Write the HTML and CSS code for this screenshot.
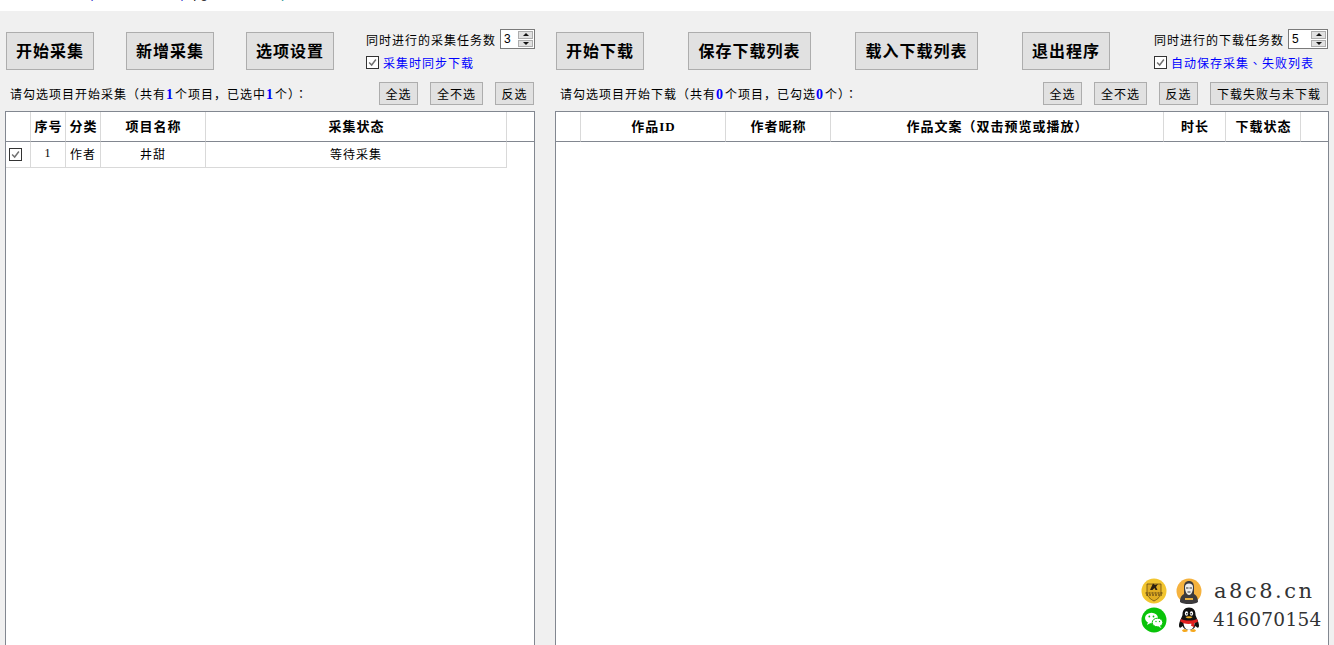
FILE: index.html
```html
<!DOCTYPE html>
<html lang="en">

<head>
  <meta charset="UTF-8">
  <meta name="viewport" content="width=device-width, initial-scale=1.0">
  <title>采集下载工具</title>
  <link rel="stylesheet" href="styles.css">
</head>

<body>
  <div class="titlebar">
    <div class="title-text"><span class="title-mark">3</span> 作品批量采集<span class="title-link">(</span>a8c8.cn/a8c8 <span class="title-sep">|</span> <span class="title-page">pg a8c8</span><span class="title-end">)</span></div>
  </div>

  <div class="main">
    <section class="panel panel-left">
      <div class="toolbar">
        <button class="big-btn">开始采集</button>
        <button class="big-btn">新增采集</button>
        <button class="big-btn">选项设置</button>
        <div class="options">
          <div class="task-row">
            <span>同时进行的采集任务数</span>
            <div class="spin spin-left"><span class="spin-value">3</span><span class="spin-arrows"><i class="up"></i><i class="down"></i></span></div>
          </div>
          <div class="check-row">
            <span class="check"><svg viewBox="0 0 13 13"><path d="M2.500 6.500l3 3 5-6.500" /></svg></span>
            <span class="blue-label">采集时同步下载</span>
          </div>
        </div>
      </div>

      <div class="selectbar">
        <p class="hint">请勾选项目开始采集（共有<b>1</b>个项目，已选中<b>1</b>个）<span class="mid-punct">：</span></p>
        <button class="small-btn btn-2">全选</button>
        <button class="small-btn btn-3">全不选</button>
        <button class="small-btn btn-2">反选</button>
      </div>

      <div class="list">
        <table>
          <colgroup>
            <col class="w-25">
            <col class="w-35">
            <col class="w-35">
            <col class="w-105">
            <col class="w-301">
            <col>
          </colgroup>
          <thead>
            <tr>
              <th></th>
              <th>序号</th>
              <th>分类</th>
              <th>项目名称</th>
              <th>采集状态</th>
              <th class="filler"></th>
            </tr>
          </thead>
          <tbody>
            <tr>
              <td class="check-cell"><span class="check"><svg viewBox="0 0 13 13"><path d="M2.500 6.500l3 3 5-6.500" /></svg></span></td>
              <td class="num">1</td>
              <td>作者</td>
              <td>井甜</td>
              <td>等待采集</td>
              <td class="filler"></td>
            </tr>
          </tbody>
        </table>
      </div>
    </section>

    <section class="panel panel-right">
      <div class="toolbar toolbar-right">
        <button class="big-btn">开始下载</button>
        <button class="big-btn big-wide">保存下载列表</button>
        <button class="big-btn big-wide">载入下载列表</button>
        <button class="big-btn">退出程序</button>
        <div class="options">
          <div class="task-row">
            <span>同时进行的下载任务数</span>
            <div class="spin spin-right"><span class="spin-value">5</span><span class="spin-arrows"><i class="up"></i><i class="down"></i></span></div>
          </div>
          <div class="check-row">
            <span class="check"><svg viewBox="0 0 13 13"><path d="M2.500 6.500l3 3 5-6.500" /></svg></span>
            <span class="blue-label">自动保存采集<span class="mid-punct">、</span>失败列表</span>
          </div>
        </div>
      </div>

      <div class="selectbar">
        <p class="hint">请勾选项目开始下载（共有<b>0</b>个项目，已勾选<b>0</b>个）<span class="mid-punct">：</span></p>
        <button class="small-btn btn-2">全选</button>
        <button class="small-btn btn-3">全不选</button>
        <button class="small-btn btn-2">反选</button>
        <button class="small-btn">下载失败与未下载</button>
      </div>

      <div class="list">
        <table>
          <colgroup>
            <col class="w-25">
            <col class="w-145">
            <col class="w-105">
            <col class="w-333">
            <col class="w-62">
            <col class="w-75">
            <col>
          </colgroup>
          <thead>
            <tr>
              <th></th>
              <th>作品<span class="latin">ID</span></th>
              <th>作者昵称</th>
              <th>作品文案（双击预览或播放）</th>
              <th>时长</th>
              <th>下载状态</th>
              <th class="filler"></th>
            </tr>
          </thead>
        </table>
      </div>
    </section>
  </div>

  <div class="watermark">
    <div class="mark-row">
      <svg class="mark-icon" viewBox="0 0 26 26">
        <circle cx="13" cy="13" r="12.500" fill="#f2c530" />
        <path d="M6 6h14v9c0 3-3 6-7 8-4-2-7-5-7-8z" fill="#e0ad22" stroke="#6a4c14" stroke-width="0.800" />
        <path d="M9 12l3-6.500 2 1.500 3-1-2 3 1.500 3h-2l-1-2-2 2z" fill="#2b2010" />
        <path d="M4.500 15h17M5 17h16" stroke="#4a3410" stroke-width="1.200" stroke-dasharray="2 1" />
      </svg>
      <svg class="mark-icon" viewBox="0 0 26 26">
        <circle cx="13" cy="13" r="12.500" fill="#f5b23e" />
        <path d="M4 24c0-5 2-7 4-8V9c0-4 2-6 5-6s5 2 5 6v7c2 1 4 3 4 8-2 1.500-5 2-9 2s-7-.5-9-2z" fill="#3c3a3c" />
        <path d="M9 9c0-2 1.500-3.500 4-3.500s4 1.500 4 3.500c0 4-1.500 8-4 8s-4-4-4-8z" fill="#eeeeee" />
        <path d="M10 10h2.500M13.500 10h2.500M11.500 14h3" stroke="#333" stroke-width="1" />
        <path d="M9 20h8v2H9z" fill="#e8b040" />
      </svg>
      <span class="mark-text">a8c8.cn</span>
    </div>
    <div class="mark-row">
      <svg class="mark-icon" viewBox="0 0 26 26">
        <circle cx="13" cy="13" r="12.500" fill="#09c309" />
        <ellipse cx="10.500" cy="11" rx="6.500" ry="5.300" fill="#fff" />
        <path d="M7 15l-1 3 3.500-2z" fill="#fff" />
        <ellipse cx="16.500" cy="15.500" rx="5.300" ry="4.300" fill="#fff" stroke="#09c309" stroke-width="1" />
        <path d="M19 19l1.500 2-3.500-1.500z" fill="#fff" />
        <circle cx="8.300" cy="9.500" r="0.900" fill="#09c309" />
        <circle cx="12.500" cy="9.500" r="0.900" fill="#09c309" />
        <circle cx="15" cy="14.500" r="0.700" fill="#09c309" />
        <circle cx="18.500" cy="14.500" r="0.700" fill="#09c309" />
      </svg>
      <svg class="mark-icon" viewBox="0 0 26 26">
        <path d="M13 0.500c-4.500 0-6.500 3-6.500 7 0 2-3.500 7-3.500 11 0 2 1 3 2.500 1.500l1-1c1 2.500 3.500 4 6.500 4s5.500-1.500 6.500-4l1 1c1.500 1.500 2.500.500 2.500-1.500 0-4-3.500-9-3.500-11 0-4-2-7-6.500-7z" fill="#111" />
        <path d="M7.500 14c-.5 5 2 9 5.500 9s6-4 5.500-9z" fill="#fff" />
        <path d="M5 12c5 2 11 2 16 0l1 2.500c-1 .8-2.500 1.300-4 1.800l.5 4-3.500-1.500.5-2c-2.500.3-5 .2-8-.5-1-.5-2.500-1.500-3.500-2z" fill="#e02020" />
        <ellipse cx="10.500" cy="6.500" rx="1.600" ry="2.200" fill="#fff" />
        <ellipse cx="15.500" cy="6.500" rx="1.600" ry="2.200" fill="#fff" />
        <circle cx="10.800" cy="6.800" r="0.800" fill="#111" />
        <circle cx="15.200" cy="6.800" r="0.800" fill="#111" />
        <path d="M9.500 10c2.300-1 4.700-1 7 0-1 1.800-6 1.800-7 0z" fill="#f5b21e" />
        <path d="M6 23.500c1-2 5-1.500 6 .5-2 1.500-5 1.500-6-.5zM14 24c1-2 5-2.500 6-.5-1 2-4 2-6 .5z" fill="#f5a81e" />
      </svg>
      <span class="mark-text mark-number">416070154</span>
    </div>
  </div>
</body>

</html>
```

FILE: styles.css
```css
* {
  box-sizing: border-box;
}

html,
body {
  height: 100%;
}

body {
  font-family: "Noto Sans CJK SC", "Liberation Sans", sans-serif;
  font-size: 12px;
  letter-spacing: 1px;
  color: #000;
  margin: 0;
  background-color: #f0f0f0;
  display: flex;
  flex-direction: column;
  overflow: hidden;
}

button {
  font-family: inherit;
  letter-spacing: inherit;
  color: #000;
  background-color: #e1e1e1;
  border: 1px solid #adadad;
  padding: 0;
  white-space: nowrap;
}

/* clipped caption line at the very top */
.titlebar {
  height: 11px;
  flex: none;
  background: #fff;
  overflow: hidden;
}

.title-text {
  font-family: "Liberation Sans", "Noto Sans CJK SC", sans-serif;
  font-size: 13px;
  line-height: 16px;
  margin-top: -14px;
  white-space: nowrap;
  letter-spacing: 0;
}

.title-mark {
  color: #d98a10;
}

.title-link {
  color: #1a22c8;
}

.title-sep {
  color: #1a22c8;
  margin-left: 6px;
}

.title-page {
  color: #222;
  margin-left: 6px;
}

.title-end {
  color: #0a8a8a;
  margin-left: 42px;
}

.main {
  flex: 1;
  min-height: 0;
  display: flex;
  gap: 20px;
  padding: 0 5px;
}

.panel {
  display: flex;
  flex-direction: column;
  min-width: 0;
}

.panel-left {
  width: 530px;
  flex: none;
}

.panel-right {
  flex: 1;
}

.toolbar {
  display: flex;
  align-items: flex-start;
  gap: 32px;
  height: 71px;
  padding: 18px 0 0 1px;
}

.toolbar-right {
  gap: 44px;
}

.big-btn {
  width: 88px;
  height: 38px;
  flex: none;
  margin-top: 3px;
  padding: 0 0 2px;
  font-size: 16px;
  font-weight: 700;
  line-height: 1;
}

.big-wide {
  width: 123px;
}

.options {
  display: flex;
  flex-direction: column;
  gap: 6px;
}

.task-row {
  display: flex;
  align-items: center;
  gap: 4px;
  height: 20px;
  white-space: nowrap;
}

.spin {
  height: 20px;
  display: flex;
  justify-content: space-between;
  background: #fff;
  border: 1px solid #7a7a7a;
  padding: 1px;
}

.spin-left {
  width: 35px;
}

.spin-right {
  width: 40px;
}

.spin-value {
  font-family: "Liberation Sans", sans-serif;
  font-size: 12px;
  line-height: 16px;
  padding-left: 2px;
}

.spin-arrows {
  width: 15px;
  display: flex;
  flex-direction: column;
  gap: 1px;
}

.spin-arrows i {
  flex: 1;
  background: #e1e1e1;
  border: 1px solid #adadad;
  display: flex;
  align-items: center;
  justify-content: center;
}

.spin-arrows i::after {
  content: "";
  border-left: 3px solid transparent;
  border-right: 3px solid transparent;
}

.spin-arrows .up::after {
  border-bottom: 3px solid #111;
}

.spin-arrows .down::after {
  border-top: 3px solid #111;
}

.check-row {
  display: flex;
  align-items: center;
  gap: 4px;
  height: 14px;
  white-space: nowrap;
}

.check {
  width: 13px;
  height: 13px;
  flex: none;
  background: #fff;
  border: 1px solid #333;
  display: block;
}

.check svg {
  display: block;
  width: 11px;
  height: 11px;
  fill: none;
  stroke: #707070;
  stroke-width: 1.700;
}

.blue-label {
  color: #0000ff;
}

.mid-punct {
  font-family: "Noto Sans CJK TC", sans-serif;
}

.selectbar {
  display: flex;
  align-items: center;
  gap: 12px;
  height: 23px;
  padding-right: 1px;
}

.hint {
  margin: 0 auto 0 5px;
  white-space: nowrap;
}

.hint b {
  font-family: "Liberation Serif", serif;
  font-size: 14px;
  letter-spacing: 2px;
  color: #0000ff;
}

.small-btn {
  height: 23px;
  padding: 0 6px;
  font-size: 12px;
  line-height: 1;
}

.btn-2 {
  width: 39px;
  padding: 0;
}

.btn-3 {
  width: 53px;
  padding: 0;
}

.list {
  flex: 1;
  min-height: 0;
  margin-top: 6px;
  background: #fff;
  border: 1px solid #828790;
  border-bottom: 0;
}

table {
  width: 100%;
  table-layout: fixed;
  border-collapse: separate;
  border-spacing: 0;
}

th,
td {
  padding: 0;
  text-align: center;
  border-right: 1px solid #d9d9d9;
  white-space: nowrap;
  overflow: hidden;
}

th {
  height: 30px;
  padding: 0 0 2px 1px;
  font-size: 13px;
  font-weight: 700;
  border-bottom: 1px solid #828790;
}

td {
  height: 26px;
  padding-bottom: 2px;
  font-size: 12px;
  border-bottom: 1px solid #d9d9d9;
}

.filler {
  border-right: 0;
}

td.filler {
  border-bottom: 0;
}

.check-cell {
  padding-bottom: 0;
}

.check-cell .check {
  margin-left: 3px;
}

.num {
  font-family: "Liberation Serif", serif;
}

.latin {
  font-family: "Liberation Serif", serif;
}

.w-25 { width: 25px; }
.w-35 { width: 35px; }
.w-62 { width: 62px; }
.w-75 { width: 75px; }
.w-105 { width: 105px; }
.w-145 { width: 145px; }
.w-301 { width: 301px; }
.w-333 { width: 333px; }

/* contact badge sitting over the download list */
.watermark {
  position: absolute;
  left: 1141px;
  top: 577px;
  display: flex;
  flex-direction: column;
  gap: 2px;
}

.mark-row {
  display: flex;
  align-items: center;
  gap: 9px;
  height: 27px;
}

.mark-icon {
  width: 26px;
  height: 26px;
  flex: none;
}

.mark-text {
  font-family: "DejaVu Serif", serif;
  font-size: 21px;
  letter-spacing: 2.500px;
  color: #333;
  margin-left: 3px;
  white-space: nowrap;
}

.mark-number {
  font-size: 18.500px;
  letter-spacing: 0.300px;
  margin-left: 2px;
}
```
